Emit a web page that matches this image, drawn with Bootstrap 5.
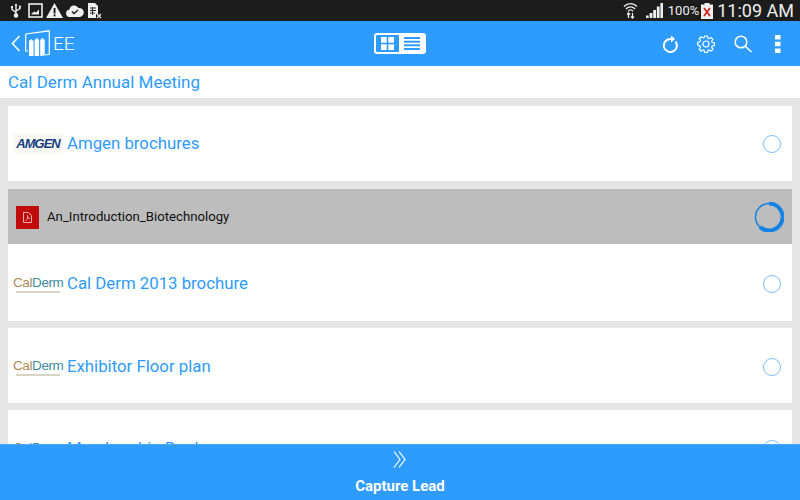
<!DOCTYPE html>
<html lang="en">
<head>
    <meta charset="UTF-8">
    <title>Cal Derm Annual Meeting</title>
    <link href="https://cdn.jsdelivr.net/npm/bootstrap@5.3.2/dist/css/bootstrap.min.css" rel="stylesheet">
    <style>
        html, body { height: 500px; overflow: hidden; }
        body { font-family: Roboto, sans-serif; background: #e5e5e5; }
        .status-strip { height: 21px; background: #1c1c1c; color: #eee; padding: 0 6px 0 10px; }
        .status-left { gap: 3px; }
        .status-image { margin-left: 3px; }
        .status-signal { margin-left: 8px; }
        .status-pct { font-size: 13px; line-height: 21px; margin: 0 2px 0 5px; }
        .status-time { font-size: 18px; line-height: 21px; margin-left: 4px; }
        .app-head { height: 45px; background: #2e9bff; color: #fff; padding: 0 19px 0 11px; }
        .app-title { font-size: 19px; font-weight: 300; margin-left: 2px; line-height: 1; }
        .head-tools { gap: 19px; }
        .head-side { width: 300px; }
        .head-left { width: 308px; }
        .view-toggle { width: 52px; height: 21px; border: 2px solid #fff; border-radius: 3px; }
        .view-grid { width: 24px; }
        .view-lines { width: 26px; background: #fff; }
        .event-title { height: 32px; background: #fff; color: #2e9bff; font-size: 17px; line-height: 33px; padding-left: 8px; }
        .file-list { padding: 8px 8px 0; min-height: 0; }
        .file-row { height: 75px; background: #fff; color: #2e9bff; font-size: 16.8px; padding: 0 11px 0 5px; margin-bottom: 7px; flex-shrink: 0; }
        .file-row.tall { height: 77px; }
        .file-row.nudged { padding-top: 2px; }
        .file-name { margin-left: 4px; }
        .brand-box { width: 50px; text-align: center; line-height: 1; white-space: nowrap; }
        .brand-amgen { background: #fbf8f5; color: #17407f; font: italic 700 13px "Liberation Sans", sans-serif; letter-spacing: -1px; padding: 3px 0; }
        .brand-cal { color: #a98a55; font: 400 13.5px "Liberation Sans", sans-serif; letter-spacing: -.4px; }
        .brand-cal span { color: #3f8ca0; }
        .brand-tag { height: 2px; margin: 1px 3px 0; background: #d8d3c4; }
        .pick-ring { width: 18px; height: 18px; border: 1.5px solid #7cc0fb; border-radius: 50%; }
        .download-row { height: 55px; background: #bdbdbd; color: #111; font-size: 13.2px; padding: 1px 8px 0 8px; flex-shrink: 0; }
        .pdf-tile { width: 23px; height: 23px; background: #c20c0c; margin-right: 8px; }
        .capture-bar { height: 56px; background: #2e9bff; color: #fff; flex-shrink: 0; border-top: 1px solid #4aa9ff; }
        .capture-chevrons { margin-top: 6px; }
        .capture-label { font-size: 15px; font-weight: 700; line-height: 1; margin-top: 11px; }
    </style>
</head>
<body class="d-flex flex-column">

<div class="status-strip d-flex align-items-center flex-shrink-0">
    <div class="status-left d-flex align-items-center">
        <svg width="12" height="15" viewBox="0 0 12 15" fill="none" stroke="#eee" stroke-width="1.4"><path d="M6 1v13M2 4v2.500L6 9.500M10 4v1.500L6 8"/><circle cx="6" cy="12.500" r="1.600" fill="#eee"/><rect x="1" y="3" width="2" height="2" fill="#eee" stroke="none"/><circle cx="10" cy="3.500" r="1.100" fill="#eee" stroke="none"/><path d="M4.500 2.500L6 .5l1.500 2z" fill="#eee" stroke="none"/></svg>
        <svg class="status-image" width="15" height="15" viewBox="0 0 15 15"><rect x="1" y="1" width="13" height="13" fill="none" stroke="#eee" stroke-width="1.600"/><path d="M3.500 11.500v-1l3-2 1.500 1 3-3v5z" fill="#eee"/></svg>
        <svg width="17" height="15" viewBox="0 0 17 15"><path d="M8.500 0L17 15H0z" fill="#eee"/><rect x="7.600" y="5" width="1.900" height="5.500" fill="#1c1c1c"/><rect x="7.600" y="11.400" width="1.900" height="1.900" fill="#1c1c1c"/></svg>
        <svg width="18" height="12" viewBox="0 0 18 12"><path d="M4 12a3.600 3.600 0 0 1-.6-7.200A4.800 4.800 0 0 1 12.400 3 4.500 4.500 0 0 1 14 12z" fill="#eee"/><path d="M6 6.500l2 2 4-3.500" fill="none" stroke="#1c1c1c" stroke-width="1.400"/></svg>
        <svg width="15" height="16" viewBox="0 0 15 16"><path d="M1 0h7l3 3v8H9v4H1z" fill="#eee"/><path d="M3 5h6M3 7.500h6M3 10h5M5.500 4v8" stroke="#1c1c1c" stroke-width=".9"/><path d="M10 11l4 4M14 11l-4 4" stroke="#eee" stroke-width="1.200"/></svg>
    </div>
    <div class="d-flex align-items-center ms-auto">
        <svg width="15" height="17" viewBox="0 0 15 17" fill="none" stroke="#eee" stroke-width="1.300"><path d="M1 4.500a9 9 0 0 1 13 0M3 7a6 6 0 0 1 9 0M5 9.300a3 3 0 0 1 5 0"/><path d="M5.500 11v5M4 12.500l1.500-1.500L7 12.500M9.500 16v-5M8 14.500l1.500 1.500 1.500-1.500"/></svg>
        <svg class="status-signal" width="17" height="15" viewBox="0 0 17 15" fill="#eee"><rect x="0" y="12.500" width="2.600" height="2.500"/><rect x="3.600" y="10" width="2.800" height="5"/><rect x="7.200" y="7" width="2.800" height="8"/><rect x="10.800" y="3.500" width="2.800" height="11.500"/><rect x="14.400" y="0" width="2.600" height="15"/></svg>
        <span class="status-pct">100%</span>
        <svg width="12" height="16" viewBox="0 0 12 16"><rect x="3.500" y="0" width="5" height="2" fill="#eee"/><rect x="0" y="1.500" width="12" height="14.500" fill="#eee"/><path d="M3 5l6 8M9 5l-6 8" stroke="#c8201a" stroke-width="1.700"/></svg>
        <span class="status-time">11:09 AM</span>
    </div>
</div>

<div class="app-head d-flex align-items-center justify-content-between flex-shrink-0">
    <div class="head-side head-left d-flex align-items-center">
        <svg width="10" height="17" viewBox="0 0 10 17" fill="none" stroke="#fff" stroke-width="1.600"><path d="M8.500 1L1.500 8.500 8.500 16"/></svg>
        <svg class="ms-1" width="26" height="27" viewBox="0 0 26 27"><path d="M.7 4L24.300 .8V24.300L20 25M.7 4V21H3" fill="none" stroke="#fff" stroke-width="1.200"/><path d="M4 10.500h1l1.200-1.500 1.300 1.500h1V26H4zM9.600 9.500h1l1.200-2 1.300 2h1V26H9.600zM15.200 9.500h1l1.200-2 1.300 2h1V25.500l-4.500.5z" fill="#fff"/></svg>
        <span class="app-title">EE</span>
    </div>
    <div class="view-toggle d-flex overflow-hidden">
        <div class="view-grid d-flex align-items-center justify-content-center">
            <svg width="13" height="13" viewBox="0 0 13 13" fill="#fff"><rect width="5.700" height="5.700"/><rect x="7.300" width="5.700" height="5.700"/><rect y="7.300" width="5.700" height="5.700"/><rect x="7.300" y="7.300" width="5.700" height="5.700"/></svg>
        </div>
        <div class="view-lines d-flex align-items-center justify-content-center">
            <svg width="16" height="13" viewBox="0 0 16 13" fill="#2e9bff"><rect width="16" height="2"/><rect y="3.700" width="16" height="2"/><rect y="7.300" width="16" height="2"/><rect y="11" width="16" height="2"/></svg>
        </div>
    </div>
    <div class="head-side head-tools d-flex align-items-center justify-content-end">
        <svg width="16" height="18" viewBox="0 0 16 18" fill="none" stroke="#fff" stroke-width="2"><path d="M13.500 6.500A6.500 6.500 0 1 1 8 4h2"/><path d="M9 .5L13 4 9 7.500z" fill="#fff" stroke="none"/></svg>
        <svg width="18" height="18" viewBox="0 0 18 18" fill="none" stroke="#fff" stroke-width="1.200"><path d="M7.600 1h2.800l.4 2.300 1.500.6 1.900-1.300 2 2-1.300 1.900.6 1.500 2.300.4v2.800l-2.300.4-.6 1.500 1.300 1.900-2 2-1.900-1.300-1.500.6-.4 2.300H7.600l-.4-2.300-1.500-.6-1.900 1.300-2-2 1.300-1.900-.6-1.500L.2 10.400V7.600l2.300-.4.6-1.500-1.300-1.900 2-2 1.900 1.300 1.500-.6z" transform="translate(.5 0) scale(.95)"/><circle cx="9" cy="9" r="3"/></svg>
        <svg width="18" height="18" viewBox="0 0 18 18" fill="none" stroke="#fff" stroke-width="1.500"><circle cx="7" cy="7" r="5.800"/><path d="M11.200 11.200L17.500 17"/></svg>
        <svg class="ms-1" width="6" height="18" viewBox="0 0 6 18" fill="#fff"><rect width="5.500" height="4.500"/><rect y="6.700" width="5.500" height="4.500"/><rect y="13.500" width="5.500" height="4.500"/></svg>
    </div>
</div>

<div class="event-title flex-shrink-0">Cal Derm Annual Meeting</div>

<div class="file-list flex-grow-1 overflow-hidden d-flex flex-column">
    <div class="file-row d-flex align-items-center mb-0">
        <div class="brand-box brand-amgen">AMGEN</div>
        <span class="file-name">Amgen brochures</span>
        <div class="pick-ring ms-auto"></div>
    </div>
    <div class="download-row d-flex align-items-center mt-2">
        <div class="pdf-tile d-flex align-items-center justify-content-center">
            <svg width="9" height="11" viewBox="0 0 9 11" fill="none" stroke="#f0b0b0" stroke-width="1"><path d="M.5 .5h5l3 3v7h-8z"/><path d="M2.500 8.500c2-1 2.500-3 2-5 0 2 1 3 2.500 3"/></svg>
        </div>
        <span>An_Introduction_Biotechnology</span>
        <svg class="ms-auto" width="30" height="30" viewBox="0 0 30 30" fill="none"><circle cx="15" cy="15" r="13.500" stroke="#1583e6" stroke-width="1.500"/><path d="M15 1.500A13.500 13.500 0 1 1 6 25" stroke="#1583e6" stroke-width="4"/></svg>
    </div>
    <div class="file-row tall nudged d-flex align-items-center">
        <div class="brand-box brand-cal">Cal<span>Derm</span><div class="brand-tag"></div></div>
        <span class="file-name">Cal Derm 2013 brochure</span>
        <div class="pick-ring ms-auto"></div>
    </div>
    <div class="file-row nudged d-flex align-items-center">
        <div class="brand-box brand-cal">Cal<span>Derm</span><div class="brand-tag"></div></div>
        <span class="file-name">Exhibitor Floor plan</span>
        <div class="pick-ring ms-auto"></div>
    </div>
    <div class="file-row nudged d-flex align-items-center">
        <div class="brand-box brand-cal">Cal<span>Derm</span><div class="brand-tag"></div></div>
        <span class="file-name">Membership Book</span>
        <div class="pick-ring ms-auto"></div>
    </div>
</div>

<div class="capture-bar d-flex flex-column align-items-center">
    <svg class="capture-chevrons" width="15" height="17" viewBox="0 0 15 17" fill="none" stroke="#fff" stroke-width="1.200"><path d="M1 .5L7 8.500 1 16.500M6 .5L12 8.500 6 16.500"/></svg>
    <div class="capture-label">Capture Lead</div>
</div>

<script src="https://cdn.jsdelivr.net/npm/bootstrap@5.3.2/dist/js/bootstrap.bundle.min.js"></script>
</body>
</html>
